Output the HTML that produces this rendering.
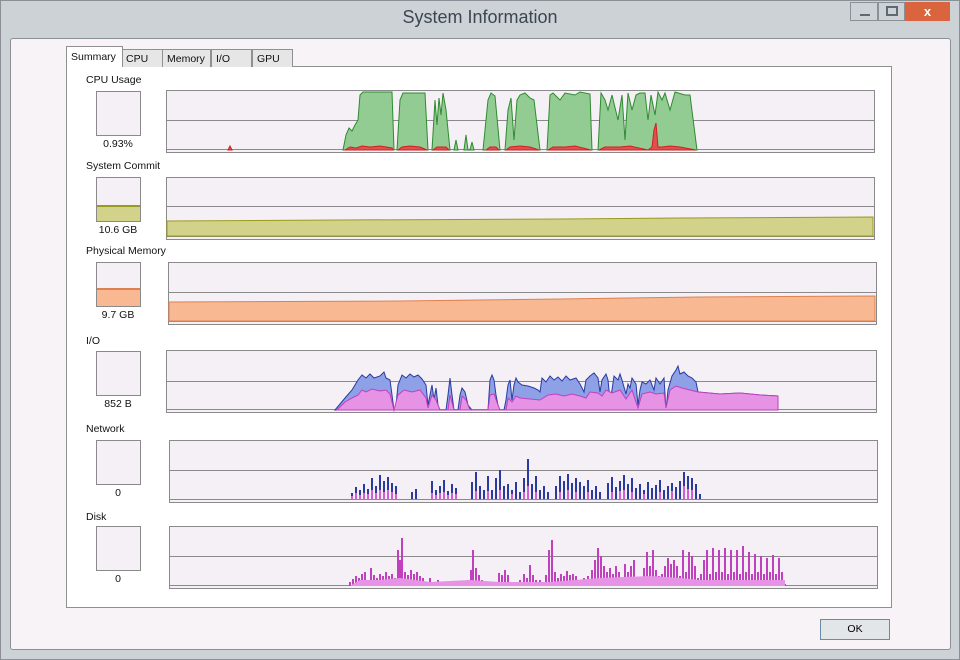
<!DOCTYPE html>
<html><head><meta charset="utf-8"><style>
*{margin:0;padding:0;box-sizing:border-box}
body{width:960px;height:660px;background:#c9ced3;font-family:"Liberation Sans",sans-serif;position:relative;overflow:hidden}
.win{position:absolute;left:0;top:0;width:960px;height:660px;border:1px solid #8a9096;background:#cdd2d7}
.title{position:absolute;left:0;top:7px;width:960px;text-align:center;font-size:18px;color:#3c4650}
.btn{position:absolute;top:2px;height:19px;border:1px solid #8a9096;background:#cdd2d7}
.panel{position:absolute;left:10px;top:38px;width:941px;height:612px;background:#f7f3f7;border:1px solid #8a9096;border-radius:3px}
.content{position:absolute;left:66px;top:66px;width:826px;height:542px;background:#fff;border:1px solid #909090}
.tab{position:absolute;top:49px;height:18px;border:1px solid #909090;border-bottom:none;background:#e6e6e6;font-size:10.5px;padding:3px 0 0 4px;color:#111}
.lbl{position:absolute;font-size:10.5px;color:#111}
.box{position:absolute;width:45px;height:45px;border:1px solid #8a8a8a;background:#f5f0f5;overflow:hidden}
.val{position:absolute;font-size:10.5px;color:#111;width:60px;text-align:center}
.ok{position:absolute;left:820px;top:619px;width:70px;height:21px;border:1px solid #6a8aa8;background:#e3e6e9;font-size:10.5px;text-align:center;line-height:19px}
svg{position:absolute;left:0;top:0}
</style></head><body>
<div class="win"></div>
<div class="title">System Information</div>
<div class="btn" style="left:850px;width:28px"><div style="position:absolute;left:9px;top:11px;width:10px;height:2px;background:#606870"></div></div>
<div class="btn" style="left:878px;width:27px"><div style="position:absolute;left:7px;top:3px;width:12px;height:10px;border:2px solid #606870"></div></div>
<div style="position:absolute;left:905px;top:2px;width:45px;height:19px;background:#d9643d;color:#fff;font-size:13px;text-align:center;line-height:19px;font-weight:bold">x</div>
<div class="panel"></div>
<div class="content"></div>
<div class="tab" style="left:121px;width:42px">CPU</div>
<div class="tab" style="left:162px;width:49px">Memory</div>
<div class="tab" style="left:211px;width:41px">I/O</div>
<div class="tab" style="left:252px;width:41px">GPU</div>
<div class="tab" style="left:66px;width:57px;top:46px;height:21px;background:#fff;padding-top:4px">Summary</div>

<div class="lbl" style="left:86px;top:74px">CPU Usage</div>
<div class="box" style="left:96px;top:91px"></div><div class="val" style="left:88px;top:138px">0.93%</div>
<div class="lbl" style="left:86px;top:160px">System Commit</div>
<div class="box" style="left:96px;top:177px"><div style="position:absolute;left:0;top:27px;width:45px;height:18px;background:#d3d28a;border-top:2px solid #9a9a1e"></div></div><div class="val" style="left:88px;top:224px">10.6 GB</div>
<div class="lbl" style="left:86px;top:245px">Physical Memory</div>
<div class="box" style="left:96px;top:262px"><div style="position:absolute;left:0;top:25px;width:45px;height:20px;background:#f8b892;border-top:2px solid #e08050"></div></div><div class="val" style="left:88px;top:309px">9.7 GB</div>
<div class="lbl" style="left:86px;top:335px">I/O</div>
<div class="box" style="left:96px;top:351px"></div><div class="val" style="left:88px;top:398px">852 B</div>
<div class="lbl" style="left:86px;top:423px">Network</div>
<div class="box" style="left:96px;top:440px"></div><div class="val" style="left:88px;top:487px">0</div>
<div class="lbl" style="left:86px;top:511px">Disk</div>
<div class="box" style="left:96px;top:526px"></div><div class="val" style="left:88px;top:573px">0</div>
<div class="ok">OK</div>

<svg width="960" height="660">
<g fill="#f5f0f5" stroke="#8a8a8a">
<rect x="166.5" y="90.5" width="708" height="62"/>
<rect x="166.5" y="177.5" width="708" height="62"/>
<rect x="168.5" y="262.5" width="708" height="62"/>
<rect x="166.5" y="350.5" width="710" height="62"/>
<rect x="169.5" y="440.5" width="708" height="62"/>
<rect x="169.5" y="526.5" width="708" height="62"/>
</g>
<g stroke="#8a8a8a">
<path d="M166 120.5H874M166 149.5H874M166 206.5H874M166 236.5H874M168 292.5H876M168 321.5H876M166 381.5H876M166 409.5H876M169 470.5H877M169 499.5H877M169 556.5H877M169 585.5H877"/>
</g>
<!-- CPU -->
<g fill="#93cc93" stroke="#2f8a2f">
<polygon points="343,150 346,135 349,128 352,131 355,125 358,120 360,95 363,92 392,92 394,150"/>
<polygon points="397,150 400,100 403,93 425,93 428,150"/>
<polygon points="432,150 435,100 437,125 439,98 441,115 443,93 446,110 450,150"/>
<polygon points="454,150 456,140 458,150"/>
<polygon points="464,150 466,135 468,150 470,150 472,142 474,150"/>
<polygon points="483,150 488,100 491,93 495,96 500,150"/>
<polygon points="505,150 508,110 511,98 514,140 517,100 520,95 525,93 530,98 534,100 540,150"/>
<polygon points="547,150 550,95 553,93 560,100 565,93 575,95 580,92 590,94 592,150"/>
<polygon points="598,150 601,93 605,100 608,110 612,95 618,120 622,95 625,140 628,93 632,110 636,95 640,93 645,93 648,120 651,95 655,115 658,92 662,100 665,93 670,110 675,92 685,95 690,95 697,150"/>
</g>
<g fill="#e05050" stroke="#d02020">
<polygon points="345,150 350,147 356,148 362,146 370,147 380,146 392,148 393,150"/>
<polygon points="398,150 402,147 410,146 420,147 427,150"/>
<polygon points="433,150 437,147 446,147 449,150"/>
<polygon points="486,150 490,147 496,147 499,150"/>
<polygon points="506,150 510,147 520,146 530,147 539,150"/>
<polygon points="548,150 553,147 565,147 575,146 591,150"/>
<polygon points="599,150 605,147 620,147 630,146 648,150 652,147 654,130 656,123 658,147 662,147 670,146 680,147 696,150"/>
<polygon points="228,150 230,146 232,150"/>
</g>
<!-- commit / memory -->
<polygon points="167,236 167,221 340,220 560,219 680,218 873,217 873,236" fill="#d3d28a" stroke="#9a9a1e"/>
<polygon points="169,321 169,302 400,301 560,299 700,297 875,296 875,321" fill="#f8b892" stroke="#e08050"/>
<!-- IO -->
<polygon fill="#8ea0e6" stroke="#2a3aa0" points="335,410 345,398 352,390 358,380 362,375 366,378 370,374 374,378 380,376 384,372 386,378 390,380 394,410 396,405 398,385 402,375 406,378 410,374 414,377 418,375 422,379 426,385 428,405 430,395 432,385 434,400 436,388 438,405 440,410 446,410 448,395 450,378 452,395 454,410 458,410 460,395 462,388 465,392 468,405 472,410 488,410 490,380 492,375 494,380 496,395 498,405 500,410 504,410 506,400 508,385 510,380 512,400 514,385 516,378 518,382 522,385 528,386 534,388 538,390 540,392 542,378 546,382 550,376 554,380 558,377 562,381 566,376 570,380 576,378 580,384 584,392 586,380 590,376 594,373 598,378 600,392 602,380 606,374 608,380 610,400 612,390 614,376 618,380 620,374 622,380 626,394 628,384 630,388 632,378 636,384 638,405 640,390 642,382 646,384 650,380 654,390 656,378 660,384 664,378 666,410 668,390 672,376 676,370 678,366 680,374 684,372 688,376 692,378 696,382 698,392 720,394 740,393 760,395 778,396 778,410"/>
<polygon fill="#e693e6" stroke="#c040c0" points="337,410 345,402 352,398 358,395 362,390 366,392 372,389 380,391 386,390 390,394 394,410 398,395 404,390 412,392 420,390 426,398 428,408 432,395 436,400 440,410 448,410 450,395 454,410 460,410 462,396 466,400 470,410 488,410 490,395 494,394 498,405 500,410 506,410 508,398 512,402 516,396 520,398 540,400 548,395 556,394 564,396 572,394 580,396 586,398 590,392 598,393 602,396 606,390 612,393 620,390 626,399 632,390 638,408 642,394 650,392 656,394 664,393 666,408 670,390 676,386 682,388 690,390 698,392 720,394 740,393 760,395 778,396 778,410"/>
<!-- Network spikes -->
<path stroke="#2a3aa0" stroke-width="2" fill="none" d="M352 499V493M356 499V487M360 499V490M364 499V484M368 499V489M372 499V478M376 499V486M380 499V475M384 499V481M388 499V477M392 499V483M396 499V486M412 499V492M416 499V489M432 499V481M436 499V490M440 499V486M444 499V480M448 499V491M452 499V484M456 499V488M472 499V482M476 499V472M480 499V486M484 499V490M488 499V476M492 499V490M496 499V478M500 499V470M504 499V486M508 499V484M512 499V490M516 499V482M520 499V492M524 499V478M528 499V459M532 499V484M536 499V476M540 499V490M544 499V486M548 499V492M556 499V486M560 499V476M564 499V481M568 499V474M572 499V483M576 499V478M580 499V482M584 499V486M588 499V480M592 499V490M596 499V486M600 499V492M608 499V483M612 499V477M616 499V487M620 499V481M624 499V475M628 499V484M632 499V478M636 499V488M640 499V484M644 499V490M648 499V482M652 499V488M656 499V485M660 499V480M664 499V490M668 499V486M672 499V483M676 499V487M680 499V481M684 499V472M688 499V476M692 499V478M696 499V484M700 499V494"/>
<path stroke="#d060d0" stroke-width="2" fill="none" d="M352 499V496M356 499V493M360 499V495M364 499V493M368 499V494M372 499V490M376 499V493M380 499V490M384 499V492M388 499V490M392 499V492M396 499V494M432 499V493M436 499V495M440 499V493M444 499V492M448 499V495M452 499V493M456 499V494M476 499V491M488 499V491M500 499V490M512 499V494M524 499V492M528 499V486M536 499V492M560 499V492M568 499V490M576 499V492M588 499V492M612 499V492M620 499V491M624 499V490M632 499V492M644 499V494M660 499V492M672 499V491M684 499V486M688 499V489M692 499V490"/>
<!-- Disk spikes -->
<path stroke="#c040c0" stroke-width="2" fill="none" d="M350 586V582M353 586V579M356 586V576M359 586V578M362 586V574M365 586V572M368 586V580M371 586V568M374 586V575M377 586V578M380 586V574M383 586V576M386 586V572M389 586V576M392 586V574M395 586V578M398 586V550M400 586V560M402 586V538M405 586V572M408 586V575M411 586V570M414 586V574M417 586V572M420 586V576M423 586V578M426 586V582M430 586V578M434 586V582M438 586V580M446 586V582M468 586V580M471 586V570M473 586V550M476 586V568M479 586V575M482 586V580M496 586V584M499 586V573M502 586V575M505 586V570M508 586V575M516 586V584M520 586V580M524 586V574M527 586V578M530 586V565M533 586V575M536 586V580M540 586V580M546 586V575M549 586V550M552 586V540M555 586V572M558 586V578M561 586V574M564 586V576M567 586V571M570 586V575M573 586V574M576 586V576M580 586V580M584 586V578M588 586V576M592 586V570M595 586V560M598 586V548M601 586V556M604 586V566M607 586V572M610 586V568M613 586V574M616 586V566M619 586V572M622 586V580M625 586V564M628 586V572M631 586V566M634 586V560M637 586V578M640 586V582M644 586V568M647 586V552M650 586V566M653 586V550M656 586V570M659 586V576M662 586V574M665 586V566M668 586V558M671 586V564M674 586V560M677 586V566M680 586V576M683 586V550M686 586V572M689 586V552M692 586V556M695 586V566M698 586V578M701 586V574M704 586V560M707 586V550M710 586V574M713 586V548M716 586V572M719 586V550M722 586V572M725 586V548M728 586V574M731 586V550M734 586V572M737 586V550M740 586V574M743 586V546M746 586V572M749 586V552M752 586V574M755 586V554M758 586V572M761 586V556M764 586V574M767 586V558M770 586V572M773 586V555M776 586V574M779 586V558M782 586V572M785 586V584"/>
<polygon fill="#e693e6" points="350,586 360,580 380,580 400,578 430,582 470,580 500,582 550,582 600,578 650,576 680,578 700,580 785,580 785,586"/>
</svg>
</body></html>
